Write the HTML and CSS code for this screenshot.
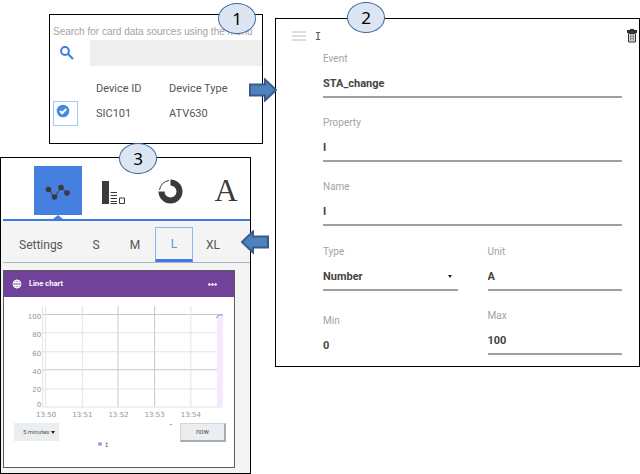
FILE: index.html
```
<!DOCTYPE html>
<html lang="en">
<head>
<meta charset="utf-8">
<title>Card data source setup</title>
<link rel="stylesheet" href="styles.css">
</head>
<body>
<main class="board">
  <div class="column">
    <section class="panel sources">
      <span class="badge badge-one">1</span>
      <label class="hint" for="search">Search for card data sources using the menu</label>
      <div class="search-row">
        <svg class="search-icon" viewBox="0 0 14 14" aria-hidden="true"><circle cx="5" cy="5" r="3.9"/><path d="M8 8l5 5"/></svg>
        <input id="search" class="search-box" type="text">
      </div>
      <table class="devices">
        <thead><tr><th class="pick"></th><th class="device">Device ID</th><th>Device Type</th></tr></thead>
        <tbody><tr>
          <td class="pick"><label class="check"><input type="checkbox" checked aria-label="Select SIC101"><svg viewBox="0 0 14 14" aria-hidden="true"><circle cx="7" cy="7" r="6.3"/><path d="M4 7l2.2 2.2L10.200 5"/></svg></label></td>
          <td>SIC101</td><td>ATV630</td>
        </tr></tbody>
      </table>
      <svg class="arrow arrow-right" viewBox="0 0 28 24" aria-hidden="true"><path d="M1 6.500H16V1.500L27 12L16 22.500V17.500H1Z"/></svg>
    </section>

    <section class="panel cards">
      <span class="badge badge-three">3</span>
      <div class="types">
        <button class="type type-active" aria-label="Line chart"><svg viewBox="0 0 48 48"><path class="stroke" d="M14.500 22.500L20.500 30L27 20.500L33 26"/><circle cx="14.500" cy="22.500" r="2.800"/><circle cx="20.500" cy="30" r="2.800"/><circle cx="27" cy="20.500" r="2.800"/><circle cx="33" cy="26" r="2.800"/></svg></button>
        <button class="type" aria-label="Bar chart"><svg viewBox="0 0 48 48"><path d="M12 14h7v23h-7z"/><path class="stroke" d="M20.500 25.500h6.500M20.500 28.500h6.500M20.500 31.500h6.500M20.500 34.500h6.500M20.500 36.500h6.500"/><path class="stroke" d="M29.500 31h5v5.500h-5z"/></svg></button>
        <button class="type" aria-label="Donut chart"><svg viewBox="0 0 48 48"><path class="ring" d="M24.500 15.500A9 9 0 1 1 15.500 24.500"/><path class="stroke" d="M13.500 23A11 11 0 0 1 23 13.500"/></svg></button>
        <button class="type type-text" aria-label="Text card">A</button>
      </div>
      <nav class="tabs">
        <button class="tab tab-settings">Settings</button>
        <button class="tab">S</button>
        <button class="tab">M</button>
        <button class="tab tab-active">L</button>
        <button class="tab">XL</button>
      </nav>
      <div class="stage">
        <article class="card">
          <header class="card-head">
            <svg class="globe" viewBox="0 0 10 10" aria-hidden="true"><circle cx="5" cy="5" r="4"/><ellipse cx="5" cy="5" rx="2" ry="4"/><path d="M1 3.500h8M1 6.500h8M5 1v8"/></svg>
            <h2>Line chart</h2>
            <button class="more" aria-label="More"><svg viewBox="0 0 9 3"><circle cx="1.400" cy="1.500" r="1.200"/><circle cx="4.500" cy="1.500" r="1.200"/><circle cx="7.600" cy="1.500" r="1.200"/></svg></button>
          </header>
          <svg class="chart" viewBox="0 0 229 122">
            <path class="grid-dark" d="M38 17.500H218M38 72.500H218M113.500 9V110M150 9V110"/>
            <path class="grid-light" d="M38 35.500H218M38 54.500H218M38 91.500H218M38 109.500H218M38.500 9V110M41.500 9V110M78 9V110M186 9V110"/>
            <path class="area" d="M212 18h6v91h-6z"/>
            <path class="line" d="M211 21l3-3h4"/>
            <g class="y-axis"><text x="37" y="22">100</text><text x="37" y="40">80</text><text x="37" y="59">60</text><text x="37" y="77">40</text><text x="37" y="95">20</text><text x="37" y="110">0</text></g>
            <g class="x-axis"><text x="42" y="119">13:50</text><text x="78" y="119">13:51</text><text x="114" y="119">13:52</text><text x="150" y="119">13:53</text><text x="186" y="119">13:54</text></g>
          </svg>
          <div class="card-tools">
            <div class="range"><select aria-label="Time range"><option>5 minutes</option></select></div>
            <svg class="spark" viewBox="0 0 4 2" aria-hidden="true"><path d="M0 1.500L1 .5H3"/></svg>
            <button class="now">now</button>
          </div>
          <div class="legend"><span class="dot"></span><span>I</span></div>
        </article>
      </div>
      <svg class="arrow arrow-left" viewBox="0 0 28 24" aria-hidden="true"><path d="M27 6.500H12V1.500L1 12L12 22.500V17.500H27Z"/></svg>
    </section>
  </div>

  <section class="panel property">
    <span class="badge badge-two">2</span>
    <header class="property-head">
      <svg class="menu" viewBox="0 0 14 10" aria-hidden="true"><path d="M0 1h14M0 5h14M0 9h14"/></svg>
      <h2>I</h2>
      <button class="trash" aria-label="Delete"><svg viewBox="0 0 10 14"><path class="lid" d="M3 0h4v1h3v3H0V1h3z"/><path class="can" d="M1.500 4.500h7v8.500h-7z"/><path class="ribs" d="M3.500 5.500v6M5 5.500v6M6.500 5.500v6"/></svg></button>
    </header>
    <form class="form">
      <div class="field"><label for="event">Event</label><input id="event" type="text" value="STA_change"></div>
      <div class="field"><label for="prop">Property</label><input id="prop" type="text" value="I"></div>
      <div class="field"><label for="name">Name</label><input id="name" type="text" value="I"></div>
      <div class="pair">
        <div class="field"><label for="type">Type</label><div class="drop"><select id="type"><option>Number</option></select></div></div>
        <div class="field"><label for="unit">Unit</label><input id="unit" type="text" value="A"></div>
        <div class="field field-plain"><label for="min">Min</label><input id="min" type="text" value="0"></div>
        <div class="field"><label for="max">Max</label><input id="max" type="text" value="100"></div>
      </div>
    </form>
  </section>
</main>
</body>
</html>
```
FILE: styles.css
```
* { box-sizing: border-box; }

body {
  margin: 0;
  background: #fff;
  color: #555;
  font-family: Roboto, "Liberation Sans", sans-serif;
}

button, input, select {
  margin: 0;
  padding: 0;
  border: 0;
  border-radius: 0;
  background: none;
  color: inherit;
  font: inherit;
  outline: 0;
}

select { appearance: none; }
h2 { margin: 0; }
svg { display: block; }

.board {
  display: grid;
  grid-template-columns: minmax(0, 263fr) minmax(0, 365fr);
  column-gap: 12px;
  align-items: start;
}

.column {
  display: flex;
  flex-direction: column;
  gap: 13px;
  padding-top: 14px;
}

.panel {
  position: relative;
  border: 1px solid #000;
  background: #fff;
}

.badge {
  position: absolute;
  z-index: 2;
  display: grid;
  place-items: center;
  width: 38px;
  height: 31px;
  border: 1px solid #3f68a0;
  border-radius: 50%;
  background: #dce6f2;
  color: #000;
  font-family: "Noto Sans", sans-serif;
  font-size: 17px;
  line-height: 28px;
}

.badge-one { top: -12px; right: 6px; }
.badge-two { top: -17px; left: 71px; }
.badge-three { top: -15px; left: 118px; }

.arrow {
  position: absolute;
  z-index: 2;
  width: 28px;
  height: 24px;
  fill: #4f81bd;
  stroke: #385d8a;
  stroke-width: 2;
}

.arrow-right { top: 63px; right: -15px; }
.arrow-left { top: 72px; right: -19px; }

/* Data sources */
.sources {
  margin-left: 49px;
  padding: 9px 0 17px 3px;
}

.hint {
  display: block;
  color: #a3a3a3;
  font-family: "Liberation Sans", sans-serif;
  font-size: 10px;
  line-height: 16px;
  white-space: nowrap;
}

.search-row { display: flex; align-items: center; }

.search-icon {
  flex: none;
  width: 14px;
  height: 14px;
  margin: 0 16px 0 7px;
  fill: none;
  stroke: #3d7be0;
  stroke-width: 2;
}

.search-box {
  flex: 1;
  min-width: 0;
  height: 26px;
  background: #efefef;
}

.devices {
  width: 100%;
  margin-top: 11px;
  border-collapse: collapse;
  font-size: 11px;
  line-height: 24px;
}

.devices th, .devices td {
  padding: 0;
  font-weight: 400;
  text-align: left;
}

.devices .pick { width: 43px; }
.devices .device { width: 73px; }

.check {
  position: relative;
  display: block;
  width: 25px;
  height: 25px;
  padding: 2px;
  border: 1px solid #a9c8fb;
}

.check input {
  position: absolute;
  inset: 0;
  opacity: 0;
}

.check svg { width: 14px; height: 14px; }
.check circle { fill: #4589e4; }
.check path { fill: none; stroke: #fff; stroke-width: 2; }

/* Card gallery */
.cards {
  margin-right: 12px;
  padding: 8px 0 0 2px;
  background: #f4f4f4;
  background-image: linear-gradient(#fff 0 62px, transparent 62px);
}

.types {
  display: grid;
  grid-template-columns: repeat(4, 56px);
  padding: 0 0 4px 31px;
  border-bottom: 2px solid #3d7be0;
}

.type {
  position: relative;
  width: 48px;
  height: 49px;
  color: #3a3a3a;
}

.type svg { width: 48px; height: 48px; fill: currentColor; }
.type .stroke { fill: none; stroke: currentColor; stroke-width: 1; }
.type .ring { fill: none; stroke: currentColor; stroke-width: 6; }

.type-text {
  font-family: "Liberation Serif", serif;
  font-size: 32px;
}

.type-active { background: #4580e0; }

.type-active::after {
  content: "";
  position: absolute;
  left: 19px;
  top: 100%;
  border: 5px solid transparent;
  border-top: 0;
  border-bottom: 4px solid #4580e0;
}

.tabs {
  display: flex;
  align-items: end;
  gap: 1px;
  padding-left: 15px;
  border-bottom: 1px solid #a9b4bb;
  color: #555;
  font-size: 12px;
}

.tab {
  width: 38px;
  height: 35px;
  margin-top: 6px;
  border: 1px solid transparent;
}

.tab-settings { width: 58px; text-align: left; }

.tab-active {
  border: 1px solid #8fb6f5;
  border-bottom: 3px solid #3d7be0;
  color: #5a94e8;
}

.stage { padding: 7px 15px 5px 0; }

.card {
  border: 1px solid #5c5c5c;
  background: #fff;
}

.card-head {
  display: flex;
  align-items: center;
  height: 26px;
  padding: 0 17px 0 8px;
  background: #70429a;
  color: #fff;
}

.globe {
  width: 10px;
  height: 10px;
  fill: none;
  stroke: #fff;
  stroke-width: 1;
}

.card-head h2 {
  margin-left: 7px;
  font-family: Inter, sans-serif;
  font-size: 7px;
  line-height: 10px;
}

.more { margin-left: auto; }
.more svg { width: 9px; height: 3px; fill: #fff; }

.chart { width: 100%; }
.grid-dark { fill: none; stroke: #c4c8cb; }
.grid-light { fill: none; stroke: #e1e3e5; }
.area { fill: #f3eafd; }
.line { fill: none; stroke: #b98bf2; stroke-width: 1; }

.chart text {
  fill: #8b949a;
  font-family: "DejaVu Sans", sans-serif;
  font-size: 7px;
}

.y-axis { text-anchor: end; }
.x-axis { text-anchor: middle; }

.card-tools {
  display: flex;
  align-items: start;
  padding: 3px 8px 0 10px;
  font-size: 7px;
}

.range {
  position: relative;
  width: 45px;
  height: 18px;
  background: #ebeef0;
}

.range select {
  width: 100%;
  height: 18px;
  padding-left: 9px;
  font-size: 6px;
}

.range::after, .drop::after {
  content: "";
  position: absolute;
  right: 4px;
  top: 8px;
  border: 2px solid transparent;
  border-top: 3px solid #222;
  border-bottom: 0;
  pointer-events: none;
}

.spark {
  width: 4px;
  height: 2px;
  margin: 1px 7px 0 auto;
  fill: none;
  stroke: #b98bf2;
}

.now {
  width: 46px;
  height: 19px;
  border: 1px solid #d2d4d6;
  border-right: 2px solid #a9acae;
  border-bottom: 2px solid #a9acae;
  background: #ebeef0;
}

.legend {
  display: flex;
  justify-content: center;
  align-items: center;
  gap: 3px;
  padding: 0 32px 20px 0;
  font-family: "DejaVu Sans Mono", monospace;
  font-size: 6px;
  line-height: 5px;
}

.dot {
  width: 4px;
  height: 4px;
  border-radius: 50%;
  background: #b98bf2;
}

/* Property editor */
.property {
  margin-top: 18px;
  padding-bottom: 8px;
}

.property-head {
  display: flex;
  align-items: center;
  height: 32px;
  padding: 2px 2px 0 16px;
}

.menu { width: 14px; height: 10px; stroke: #bcbcbc; stroke-width: 1; }

.property-head h2 {
  margin-left: 9px;
  font-family: "DejaVu Sans Mono", monospace;
  font-size: 10px;
  font-weight: 400;
}

.trash { margin-left: auto; }
.trash svg { width: 10px; height: 14px; }
.trash .lid { fill: #333; }
.trash .can { fill: #ddd; stroke: #333; }
.trash .ribs { stroke: #888; }

.form {
  display: flex;
  flex-direction: column;
  gap: 17px;
  padding: 0 17px 0 47px;
}

.pair {
  display: grid;
  grid-template-columns: 1fr 1fr;
  gap: 17px 30px;
  padding-top: 1px;
}

.field label {
  display: block;
  margin-bottom: 3px;
  color: #a3a3a3;
  font-size: 10px;
  line-height: 16px;
}

.field input, .field select {
  display: block;
  width: 100%;
  height: 28px;
  border-bottom: 2px solid #98a3a3;
  color: #444;
  font-size: 11px;
  font-weight: 700;
}

.field-plain { padding-top: 5px; }
.field-plain input { height: 26px; border-bottom: 0; }

.drop { position: relative; }
.drop::after { right: 6px; top: 12px; }
```
